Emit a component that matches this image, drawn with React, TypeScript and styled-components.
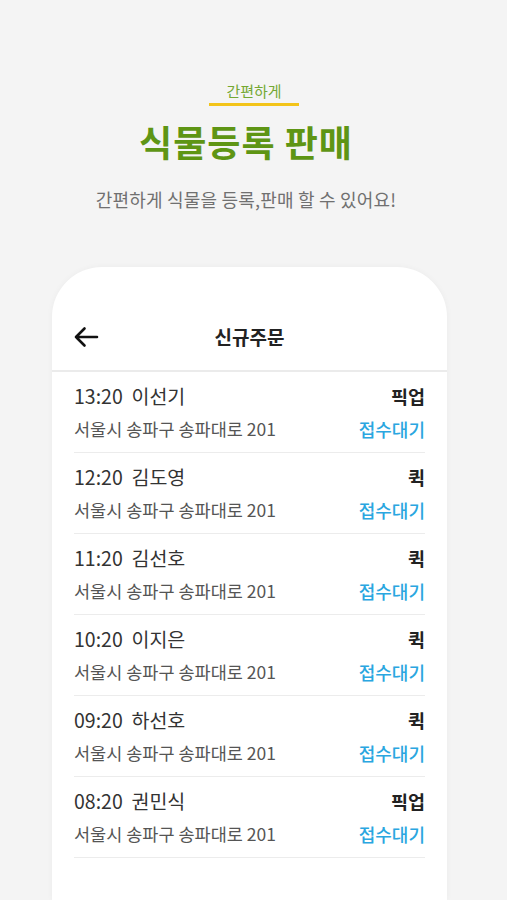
import styled, { createGlobalStyle } from "styled-components";

const GlobalStyle = createGlobalStyle`
  body {
    margin: 0;
    background: #f4f4f4;
    font-family: "Noto Sans CJK KR", "Noto Sans", sans-serif;
  }
`;

const Page = styled.div`
  width: 507px;
  height: 900px;
  overflow: hidden;
  display: flex;
  flex-direction: column;
  align-items: center;
  background: #f4f4f4;
`;

const Hero = styled.div`
  display: flex;
  flex-direction: column;
  align-items: center;
  padding: 81px 15px 0 0;
`;

const Kicker = styled.div`
  margin-left: 16px;
  font-size: 15px;
  line-height: 20px;
  color: #74a833;
  padding: 0 17px 2px;
  border-bottom: 3px solid #f3c419;
`;

const Title = styled.h1`
  margin: 13px 0 0;
  font-size: 36px;
  line-height: 44px;
  font-weight: 700;
  color: #5e9514;
  letter-spacing: 1px;
`;

const Subtitle = styled.p`
  margin: 24px 0 0;
  font-size: 18px;
  line-height: 24px;
  color: #707070;
  letter-spacing: 0.2px;
`;

const Card = styled.div`
  margin-top: 56px;
  align-self: flex-start;
  margin-left: 52px;
  width: 395px;
  flex: 1;
  background: #fff;
  border-radius: 50px 50px 0 0;
  box-shadow: 0 0 6px rgba(0, 0, 0, 0.04);
`;

const Header = styled.div`
  height: 105px;
  box-sizing: border-box;
  padding: 0 21px 12px;
  display: flex;
  align-items: flex-end;
  border-bottom: 2px solid #ebebeb;
`;

const HeaderRow = styled.div`
  height: 44px;
  width: 100%;
  display: flex;
  align-items: center;
  justify-content: center;
  position: relative;
`;

const Back = styled.svg`
  position: absolute;
  left: 0;
  top: 12px;
`;

const HeaderTitle = styled.div`
  font-size: 19px;
  font-weight: 700;
  color: #222;
  margin-top: 1px;
`;

const List = styled.div`
  padding: 0 22px;
`;

const Row = styled.div`
  height: 81px;
  box-sizing: border-box;
  padding-top: 12px;
  border-bottom: 1.5px solid #ececec;
  display: grid;
  grid-template-columns: 1fr auto;
  grid-template-rows: 24px 24px;
  row-gap: 9px;
`;

const Name = styled.div`
  font-size: 19.5px;
  line-height: 24px;
  color: #333;
  white-space: pre;
`;

const Method = styled.div`
  font-size: 18.5px;
  line-height: 24px;
  font-weight: 700;
  color: #222;
  text-align: right;
`;

const Address = styled.div`
  font-size: 17.5px;
  line-height: 24px;
  color: #555;
`;

const Status = styled.div`
  font-size: 18px;
  line-height: 24px;
  font-weight: 500;
  color: #2aa6e0;
  text-align: right;
`;

const orders = [
  { time: "13:20", name: "이선기", method: "픽업" },
  { time: "12:20", name: "김도영", method: "퀵" },
  { time: "11:20", name: "김선호", method: "퀵" },
  { time: "10:20", name: "이지은", method: "퀵" },
  { time: "09:20", name: "하선호", method: "퀵" },
  { time: "08:20", name: "권민식", method: "픽업" },
];

const App = () => (
  <Page>
    <GlobalStyle />
    <Hero>
      <Kicker>간편하게</Kicker>
      <Title>식물등록 판매</Title>
      <Subtitle>간편하게 식물을 등록,판매 할 수 있어요!</Subtitle>
    </Hero>
    <Card>
      <Header>
        <HeaderRow>
          <Back width="26" height="22" viewBox="0 0 26 22">
            <path
              d="M24 11H3M11.5 2.5L3 11l8.5 8.5"
              fill="none"
              stroke="#111"
              strokeWidth="2.6"
              strokeLinecap="round"
              strokeLinejoin="round"
            />
          </Back>
          <HeaderTitle>신규주문</HeaderTitle>
        </HeaderRow>
      </Header>
      <List>
        {orders.map((o) => (
          <Row key={o.time}>
            <Name>{`${o.time}  ${o.name}`}</Name>
            <Method>{o.method}</Method>
            <Address>서울시 송파구 송파대로 201</Address>
            <Status>접수대기</Status>
          </Row>
        ))}
      </List>
    </Card>
  </Page>
);

export default App;
